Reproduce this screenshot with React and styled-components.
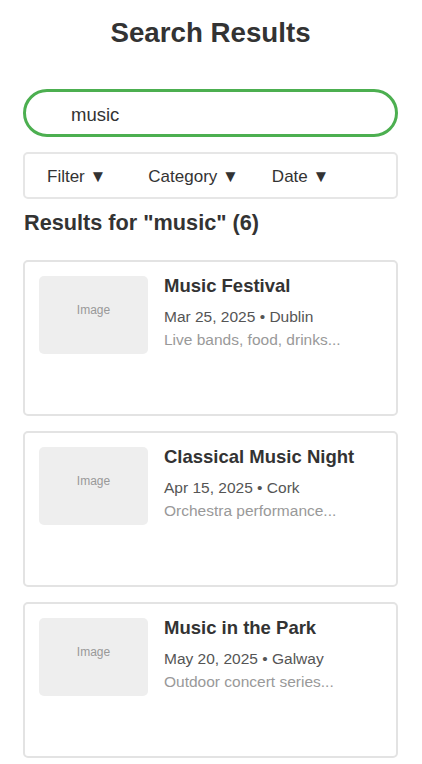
import styled, { createGlobalStyle } from "styled-components";

const GlobalStyle = createGlobalStyle`
  body {
    margin: 0;
    background: #fff;
    font-family: "Liberation Sans", Arial, sans-serif;
    color: #333;
  }
`;

const results = [
  { title: "Music Festival", date: "Mar 25, 2025", place: "Dublin", desc: "Live bands, food, drinks..." },
  { title: "Classical Music Night", date: "Apr 15, 2025", place: "Cork", desc: "Orchestra performance..." },
  { title: "Music in the Park", date: "May 20, 2025", place: "Galway", desc: "Outdoor concert series..." },
];

function App() {
  return (
    <Page>
      <GlobalStyle />
      <Title>Search Results</Title>
      <SearchBox type="text" defaultValue="music" />
      <FilterBar>
        <FilterItem>Filter ▼</FilterItem>
        <FilterItem>Category ▼</FilterItem>
        <FilterItem $tight>Date ▼</FilterItem>
      </FilterBar>
      <ResultsHeading>Results for "music" (6)</ResultsHeading>
      <List>
        {results.map((r) => (
          <Card key={r.title}>
            <Thumb>Image</Thumb>
            <Info>
              <CardTitle>{r.title}</CardTitle>
              <Meta>
                {r.date} • {r.place}
              </Meta>
              <Desc>{r.desc}</Desc>
            </Info>
          </Card>
        ))}
      </List>
    </Page>
  );
}

const Page = styled.div`
  width: 375px;
  margin: 0 0 0 23px;
  padding-top: 16px;
`;

const Title = styled.h1`
  margin: 0;
  text-align: center;
  font-size: 27.7px;
  line-height: 34px;
  font-weight: bold;
  color: #333;
`;

const SearchBox = styled.input`
  display: block;
  box-sizing: border-box;
  width: 100%;
  height: 48px;
  margin-top: 39px;
  padding: 4px 0 0 45px;
  border: 3px solid #4caf50;
  border-radius: 24px;
  font-family: "Liberation Sans", Arial, sans-serif;
  font-size: 18.5px;
  color: #333;
  outline: none;
`;

const FilterBar = styled.div`
  box-sizing: border-box;
  height: 47px;
  margin-top: 15px;
  display: flex;
  align-items: center;
  padding: 3px 0 0 22px;
  gap: 42px;
  border: 2px solid #e6e6e6;
  border-radius: 5px;
`;

const FilterItem = styled.span`
  font-size: 17px;
  color: #333;
  margin-left: ${(p) => (p.$tight ? "-9px" : "0")};
`;

const ResultsHeading = styled.h2`
  margin: 12px 0 0 1px;
  font-size: 21.7px;
  line-height: 24px;
  font-weight: bold;
  color: #333;
`;

const List = styled.div`
  margin-top: 25px;
  display: flex;
  flex-direction: column;
  gap: 15px;
`;

const Card = styled.div`
  box-sizing: border-box;
  height: 156px;
  display: flex;
  align-items: flex-start;
  gap: 16px;
  padding: 14px;
  border: 2px solid #e3e3e3;
  border-radius: 5px;
`;

const Thumb = styled.div`
  flex: none;
  width: 109px;
  height: 78px;
  line-height: 68px;
  text-align: center;
  background: #eeeeee;
  border-radius: 5px;
  font-size: 12px;
  color: #999;
`;

const Info = styled.div`
  display: flex;
  flex-direction: column;
`;

const CardTitle = styled.h3`
  margin: 0 0 9px;
  font-size: 18.5px;
  line-height: 20px;
  font-weight: bold;
  color: #333;
`;

const Meta = styled.div`
  font-size: 15.5px;
  line-height: 23px;
  color: #555;
`;

const Desc = styled.div`
  font-size: 15.5px;
  line-height: 23px;
  color: #999;
`;

export default App;
